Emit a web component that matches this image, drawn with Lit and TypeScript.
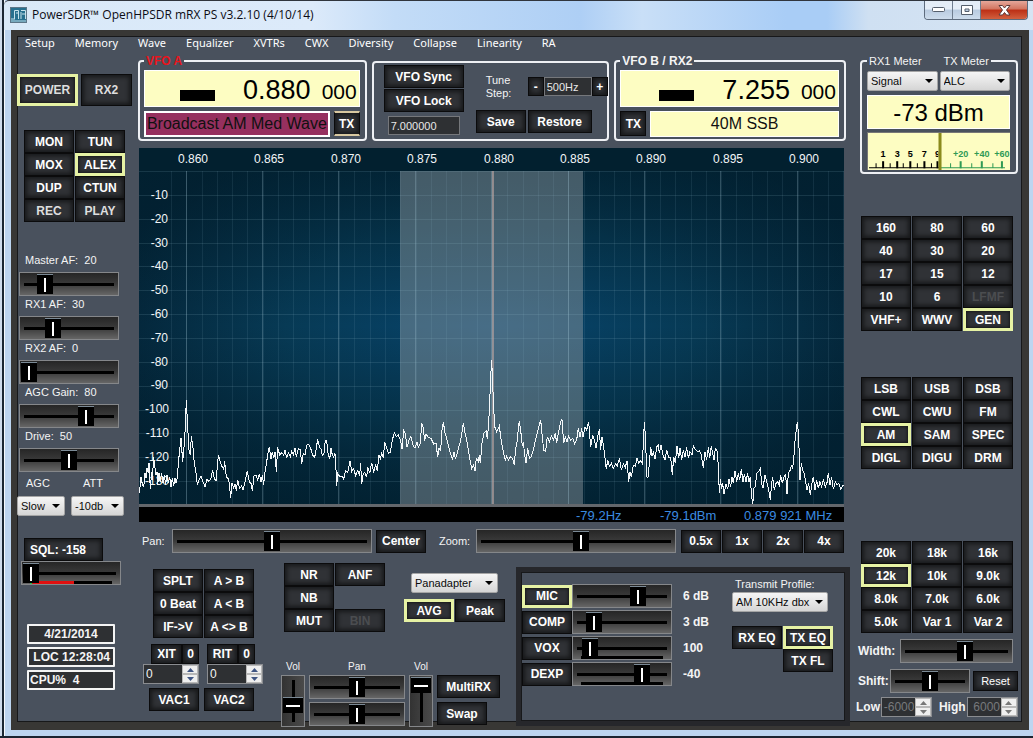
import { LitElement, html, svg, css } from "lit";
import { customElement } from "lit/decorators.js";

// Trace samples, in thirds of a pixel.
const TRACE_LOW =
  "12,460 15,440 18,412 22,432 26,442 30,400 33,415 36,385 40,400 42,368 46,448 50,395 53,420 55,350 60,385 63,405 66,395 68,435 72,400 76,425 80,400 84,430 88,405 92,435 96,405 100,430 104,410 108,442 112,415 116,438 120,415 123,430 127,412 130,370 134,330 138,295 143,365 148,310 151,260 154,180 158,260 162,330 166,345 169,287 174,325 178,370 183,400 187,435 192,420 198,408 204,425 210,440 216,418 222,424 228,415 233,390 238,415 243,424 246,390 250,345 255,362 260,378 266,388 269,364 274,412 279,415 283,430 287,475 291,430 296,445 300,432 304,452 308,420 314,445 320,438 324,450 330,425 337,393 343,425 348,430 352,452 357,408 363,405 368,420 373,402 378,425 382,405 386,435 390,395 395,365 399,340 403,320 408,358 412,335 416,355 420,335 424,395 428,322 434,345 440,338 446,345 450,330 455,355 460,338 466,350 470,333 475,345 480,325 484,350 490,325 496,330 500,372 505,340 510,345 515,315 521,312 527,325 533,345 539,352 543,330 548,298 553,320 558,328 562,345 567,340 571,300 575,302 579,340 584,358 588,325 592,345 596,352 600,340 603,390 605,438 608,400 614,410 620,408 626,417 632,392 638,398 645,362 650,395 656,385 662,408 668,392 674,405 677,370 680,432 685,400 690,398 695,412 698,380 704,400 710,368 716,395 722,375 727,392 732,345 736,355 740,340 745,355 749,305 754,320 760,340 766,338 772,300 778,278 784,290 790,285 797,302 801,328 806,272 811,280 816,322 822,300 828,290 834,315 840,325 846,305 850,322 856,310 860,248 865,265 869,302 873,283 880,292 888,295 896,312 903,310 908,350 912,325 917,330 921,270 925,245 930,280 935,295 942,325 948,345 953,358 957,335 961,355 965,345 970,325 976,305 982,270 985,248 990,280 995,300 1000,330 1005,360 1010,385 1015,375 1020,392 1024,355 1030,365 1033,345 1036,370 1041,310 1047,280 1054,272 1057,298 1061,250 1064,190 1067,110 1070,60";
const TRACE_HIGH =
  "5,60 8,130 11,200 14,260 20,275 28,258 32,290 37,320 42,345 46,360 50,348 55,360 62,350 68,355 73,375 77,325 82,300 85,265 88,242 93,280 97,318 100,305 104,345 108,370 113,325 118,355 124,350 130,330 136,300 142,280 148,255 152,240 157,290 161,330 167,335 172,290 178,305 184,288 190,300 196,280 200,310 206,275 212,245 216,238 221,310 226,290 231,305 236,288 242,300 248,295 254,312 260,300 265,265 270,290 275,265 279,290 285,262 290,270 296,245 302,320 308,285 313,300 318,325 324,285 328,268 332,330 336,290 342,330 349,388 353,360 358,380 364,370 370,385 376,372 382,378 388,355 394,390 400,372 406,382 411,362 416,425 420,395 424,410 430,375 436,378 441,355 446,368 452,362 457,372 460,310 463,245 467,300 470,410 474,412 478,370 482,320 486,348 490,338 495,358 500,320 505,315 508,340 513,315 519,345 525,360 530,330 536,352 542,352 547,405 551,350 556,370 561,318 566,355 570,325 575,360 580,330 585,350 590,322 595,355 600,335 606,345 610,318 616,328 622,335 628,332 634,345 640,385 645,335 650,360 655,322 659,355 664,318 668,340 672,360 676,325 682,335 685,380 688,460 691,418 695,448 698,430 702,462 708,432 713,448 717,418 722,440 726,412 730,428 735,392 740,425 745,400 749,420 754,388 759,425 763,402 768,425 773,400 777,425 781,412 784,460 788,495 792,445 796,440 800,400 806,395 811,385 815,430 819,445 825,405 830,425 834,440 838,460 841,480 845,430 848,412 853,450 858,430 863,425 868,435 872,405 877,430 882,410 887,405 891,462 895,400 900,392 904,378 908,385 912,345 916,290 922,245 926,290 930,420 934,370 938,390 943,402 947,425 951,450 956,430 961,465 965,435 970,410 975,450 980,420 985,445 990,425 995,440 1000,420 1006,440 1012,425 1015,398 1020,435 1025,412 1030,448 1036,425 1041,435 1046,430 1052,448 1060,435";

interface BtnOpts {
  on?: boolean;
  off?: boolean;
  cls?: string;
}

const btn = (label: string, o: BtnOpts = {}) => html`<button
  type="button"
  class=${["btn", o.cls ?? "", o.on ? "on" : ""].join(" ")}
  aria-pressed=${o.on ? "true" : "false"}
  ?disabled=${!!o.off}
>${label}</button>`;

const keypad = (labels: string[], active = "", disabled = "") => html`
  ${labels.map((l) => (l ? btn(l, { on: l === active, off: l === disabled }) : html`<span></span>`))}
`;

const slider = (name: string, value: number, cls = "") =>
  html`<input type="range" class=${`slider ${cls}`} aria-label=${name} min="0" max="100" .value=${String(value)} />`;

const select = (name: string, value: string, id = "") => html`<span class="select"
  ><select id=${id || name.replace(/\s/g, "-").toLowerCase()} aria-label=${name}><option>${value}</option></select></span>`;

const spinner = (name: string, value: string, disabled = false) => html`<span class=${disabled ? "spinner dim" : "spinner"}>
  <input type="text" inputmode="numeric" aria-label=${name} .value=${value} ?disabled=${disabled} />
  <span class="arrows">
    <button type="button" aria-label=${`${name} up`} ?disabled=${disabled}>
      <svg width="7" height="4" viewBox="0 0 7 4"><path d="M0 4L3.5 0L7 4Z" /></svg>
    </button>
    <button type="button" aria-label=${`${name} down`} ?disabled=${disabled}>
      <svg width="7" height="4" viewBox="0 0 7 4"><path d="M0 0L3.5 4L7 0Z" /></svg>
    </button>
  </span>
</span>`;

@customElement("app-root")
export class AppRoot extends LitElement {
  static styles = css`
    :host {
      display: flex;
      flex-direction: column;
      min-height: 100vh;
      box-sizing: border-box;
      border-bottom: 2px solid #1b2430;
      background: linear-gradient(90deg, #cfdcec 2px, #1b2733 2px 4px, #f6fafd 4px 5px, #bdd5f0 5px);
      font: 11px/12px "Liberation Sans", Arial, sans-serif;
      color: #f4f4f4;
    }
    * { box-sizing: border-box; }
    button, input, select { font: inherit; color: inherit; margin: 0; }

    .titlebar {
      display: flex;
      height: 30px;
      margin-left: 4px;
      padding-left: 6px;
      border-top: 1px solid #30353d;
      border-top-left-radius: 5px;
      background: linear-gradient(90deg, #d9e9f8 0, #dceafa 30%, #c3dcf7 38%, #aecff5 56%, #c9dff7 62%, #a9cdf6 76%, #a9cdf6 80%, #cfe0f2 84%, #d6e4f3 100%);
      color: #0c0c14;
    }
    .titlebar .logo { margin: 5px 4px 0 0; }
    .titlebar h1 { flex: 1; margin: 0; padding-top: 5px; font: 12px/18px "Open Sans", "Noto Sans", sans-serif; }
    .caption { display: flex; height: 19px; margin-right: 5px; border: 1px solid #5d6b7d; border-top: 0; border-radius: 0 0 4px 4px; overflow: hidden; }
    .caption button { display: grid; place-items: center; width: 28px; padding: 0; border: 0; border-right: 1px solid #6f7d8f; background: linear-gradient(#e4edf7 0 45%, #b9cbe0 50%, #cddcec); }
    .caption .close { width: 46px; border: 0; background: linear-gradient(#e5a79a 0, #d2745f 45%, #bc2f15 50%, #d2603f); }

    .frame {
      display: flex;
      flex-direction: column;
      flex: 1;
      margin: 0 4px 6px 11px;
      border: solid #383735;
      border-width: 6px 7px 8px 6px;
      background: #49515d;
      box-shadow: inset 0 0 0 1px #17181a;
    }
    nav { display: flex; gap: 20px; padding-left: 8px; height: 14px; }
    nav a { color: #fff; text-decoration: none; font: 11px/13px "Noto Sans", "Open Sans", sans-serif; }
    main { display: grid; grid-template-columns: 121px 1fr 172px; flex: 1; }

    .btn {
      height: 23px;
      width: 50px;
      padding: 0;
      border: 1px solid #0b0b0c;
      background: #303236;
      box-shadow: inset 0 0 4px 2px #17181a;
      color: #fff;
      font-weight: bold;
      font-size: 12px;
      line-height: 14px;
      white-space: nowrap;
      overflow: hidden;
    }
    .btn.on { border: 3px solid #e6f2a4; box-shadow: inset 0 0 3px 1px #17181a; }
    .btn:disabled { color: #4b4d50; }
    .btn.soft { color: #dedede; }
    .pad2 { display: grid; grid-template-columns: repeat(2, 50px); column-gap: 1px; }
    .pad3 { display: grid; grid-template-columns: repeat(3, 50px); column-gap: 1px; margin-left: 3px; }

    .slider {
      -webkit-appearance: none;
      appearance: none;
      display: block;
      width: 100px;
      height: 24px;
      padding: 0 1px;
      border: 1px solid #85878a;
      background:
        linear-gradient(#000, #000) center / calc(100% - 8px) 3px no-repeat,
        linear-gradient(#262626, #3a3a3a 50%, #666);
    }
    .slider::-webkit-slider-thumb {
      -webkit-appearance: none;
      width: 16px;
      height: 20px;
      border-top: 1px solid #7b8a96;
      border-radius: 0;
      background: linear-gradient(#fff, #fff) center / 2px 14px no-repeat, #000;
    }
    .slider.grow { flex: 1; width: auto; min-width: 60px; }
    .slider.floor {
      background:
        linear-gradient(#000, #000) center / calc(100% - 8px) 3px no-repeat,
        linear-gradient(#000, #000) 50% 100% / calc(100% - 16px) 3px no-repeat,
        linear-gradient(#262626, #3a3a3a 50%, #666);
    }
    .slider.squelch {
      background:
        linear-gradient(#000, #000) center / calc(100% - 8px) 3px no-repeat,
        linear-gradient(90deg, #2c4 2px, #e01010 2px 44px, #000 44px) 50% 100% / calc(100% - 16px) 3px no-repeat,
        linear-gradient(#262626, #3a3a3a 50%, #666);
    }
    .slider.vert {
      writing-mode: vertical-lr;
      direction: rtl;
      width: 24px;
      height: 52px;
      padding: 1px 0;
      background:
        linear-gradient(#000, #000) center / 3px calc(100% - 8px) no-repeat,
        linear-gradient(90deg, #333, #4a4a4a);
    }
    .slider.vert::-webkit-slider-thumb {
      width: 20px;
      height: 16px;
      background: linear-gradient(#fff, #fff) center / 14px 2px no-repeat, #000;
    }

    .select { position: relative; display: block; height: 20px; }
    .select select {
      -webkit-appearance: none;
      appearance: none;
      display: block;
      width: 100%;
      height: 100%;
      padding: 0 0 0 3px;
      border: 1px solid #a5a5a5;
      border-radius: 2px;
      background: linear-gradient(#f5f5f5, #e6e6e6 50%, #d5d5d5);
      color: #0a0a0a;
    }
    .select::after {
      content: "";
      position: absolute;
      right: 5px;
      top: 8px;
      border: 4px solid transparent;
      border-top-color: #000;
      border-bottom: 0;
      pointer-events: none;
    }

    .spinner { display: flex; width: 56px; height: 20px; border: 1px solid #8a8c90; background: #2e3033; }
    .spinner input { flex: 1; min-width: 0; padding: 0 2px; border: 0; background: none; font-size: 12px; color: #f4f4f4; }
    .arrows { display: flex; flex-direction: column; width: 16px; }
    .arrows button { display: grid; place-items: center; flex: 1; min-height: 0; padding: 0; border: 1px solid #b8b8b8; background: #efefef; }
    .arrows path { fill: #3f5583; }
    .spinner.dim { width: 51px; font-weight: normal; }
    .spinner.dim input { padding: 0 1px; text-align: right; color: #77797c; }
    .dim path { fill: #777; }

    fieldset, .box { margin: 0; min-width: 0; border: 2px solid #eef0f4; border-radius: 4px; }
    legend { padding: 0 2px; font-weight: bold; font-size: 12px; line-height: 12px; white-space: nowrap; }

    /* Left column */
    .left { padding-top: 24px; }
    .power { display: flex; gap: 3px; }
    .power .btn { height: 32px; width: 51px; }
    .power .btn.on { width: 61px; }
    .left .pad2 { margin: 24px 0 0 7px; }
    .levels { margin: 30px 0 0 2px; }
    .levels label { display: block; height: 20px; padding: 2px 0 0 6px; white-space: pre; }
    .agc { display: grid; grid-template-columns: 48px 53px; column-gap: 6px; }
    .agc .cap { padding: 5px 0 7px 9px; }
    .sql { margin: 22px 0 0 4px; }
    .sql .btn { display: block; width: 79px; margin-left: 3px; padding-left: 5px; text-align: left; }
    .status { display: grid; gap: 3px; width: 88px; margin: 39px 0 0 10px; }
    .status output { height: 20px; border: 2px solid #f4f4f4; border-radius: 1px; background: #2e3033; font: bold 12px/16px "Liberation Sans", Arial, sans-serif; text-align: center; white-space: pre; }
    .status .start { padding-left: 1px; text-align: left; }

    /* Centre column */
    .center { padding-top: 5px; min-width: 0; }
    .vfos { display: grid; grid-template-columns: 229fr 238fr 232fr; gap: 5px; padding-right: 4px; }
    .vfos fieldset { padding: 3px 5px 2px 4px; }
    .vfos .red { color: #e8141c; }
    .freq { display: flex; align-items: baseline; justify-content: flex-end; gap: 11px; height: 37px; padding-right: 2px; border: 1px solid #fff; background: #fdfdc2; color: #000; font-size: 27px; line-height: 38px; }
    .freq small { font-size: 21px; }
    .freq i { width: 35px; height: 11px; margin: 0 17px 5px 0; background: #000; align-self: flex-end; }
    .band { display: flex; gap: 4px; height: 26px; margin-top: 4px; }
    .band input { flex: 1; min-width: 0; padding: 0 2px; border: 1px solid #fff; background: #fdfdc2; color: #111; font-size: 16px; text-align: center; }
    .band input.wine { padding: 0; border-width: 2px; background: #96305f; }
    .band .btn { width: 26px; height: 25px; }
    .band .btn.armed { border-block: 2px solid #d8c8a0; }
    .box { margin-top: 6px; padding: 2px 10px; display: grid; grid-template-columns: 80px 1fr; column-gap: 12px; }
    .lock { display: grid; align-content: start; row-gap: 1px; }
    .lock .btn { width: 80px; }
    .field { border: 1px solid #75777b; background: #2e3033; padding: 0 2px; height: 19px; min-width: 0; color: #e8e8e8; }
    .lock .field { width: 72px; margin: 3px 0 0 4px; }
    .tune { display: flex; align-items: center; height: 33px; margin-top: 5px; padding-left: 10px; }
    .tune label { width: 42px; line-height: 13px; }
    .tune .btn { width: 16px; height: 19px; flex: none; }
    .tune .field { width: 48px; }
    .store { display: flex; gap: 2px; margin-top: 7px; }
    .store .btn + .btn { width: 64px; }

    .scope { margin: 7px 6px 0 1px; }
    .scope svg { display: block; width: 100%; }
    .scope text { font-size: 12px; fill: #f2f5f7; }
    .readout { display: flex; justify-content: flex-end; height: 18px; padding-right: 16px; border-top: 3px solid #63676c; background: #000; color: #3b8be0; font-size: 13px; line-height: 17px; white-space: nowrap; }
    .readout span { width: 84px; flex: none; }
    .zoom { display: flex; align-items: center; margin: 7px 6px 0 4px; }
    .zoom label { width: 30px; flex: none; }
    .zoom .wide { width: 50px; margin: 0 13px 0 4px; flex: none; }
    .zoom .wide + label { width: 37px; }
    .steps { display: flex; gap: 1px; margin-left: 5px; }
    .steps .btn { width: 40px; }

    .lower { display: flex; height: 159px; margin-top: 10px; }
    .split { flex: none; width: 143px; padding: 6px 0 0 5px; }
    .split .pad2 { margin-left: 10px; }
    .offsets { display: grid; grid-template-columns: 56px 56px; column-gap: 8px; margin-top: 6px; }
    .pair { display: flex; }
    .pair:first-child { justify-content: flex-end; }
    .pair .btn { width: 31px; height: 20px; }
    .pair .btn + .btn { width: 17px; }
    .vac { display: flex; gap: 5px; margin: 4px 0 0 6px; }
    .mid { flex: 1; display: flex; flex-direction: column; min-width: 234px; }
    .dsp { display: flex; gap: 19px; padding-left: 3px; height: 98px; flex: none; }
    .display { padding-top: 10px; }
    .display .select { width: 87px; margin: 0 auto 6px; }
    .mixer { display: grid; grid-template-columns: 24px 96px 24px 63px; column-gap: 4px; }
    .mixer .cap { font-size: 10px; height: 14px; text-align: center; }
    .mixer .stack { display: grid; row-gap: 3px; height: 51px; }
    .mixer .stack .slider { width: 96px; }
    .mixer .stack .btn:first-child { width: 63px; }

    .tx { flex: none; width: 334px; height: 159px; margin-top: 4px; display: flex; border: 5px solid #26272b; padding: 12px 12px 0 1px; box-shadow: inset 0 0 0 1px #17181a; }
    .voice { display: grid; grid-template-columns: 50px 100px 38px; row-gap: 2px; align-content: start; align-items: center; }
    .voice output { padding-left: 11px; font-weight: bold; font-size: 12px; white-space: nowrap; }
    .profile { margin-left: 22px; }
    .profile label { display: block; padding: 0 0 2px 3px; margin-top: -6px; }
    .profile .select { width: 96px; margin-bottom: 14px; }

    /* Right column */
    .right { padding: 5px 4px 0 8px; display: flex; flex-direction: column; }
    .meter { height: 119px; margin-left: 2px; padding: 4px 6px 0 5px; }
    .meter legend { display: flex; gap: 22px; font-weight: normal; font-size: 11px; }
    .choices { display: grid; grid-template-columns: 1fr 1fr; gap: 2px; }
    .level { display: block; height: 34px; margin: 4px 0 3px; border: 1px solid #fff; background: #fdfdc2; color: #000; font-size: 24px; line-height: 33px; text-align: center; }
    .meter svg { display: block; width: 100%; background: #fdfdc2; }
    .meter text { font-size: 9px; font-weight: bold; text-anchor: middle; }
    .bands { margin-top: 42px; }
    .modes { margin-top: 46px; }
    .filters { margin-top: 72px; }
    .line { display: flex; align-items: center; font-weight: bold; font-size: 12px; }
    .line .reset { width: 45px; height: 20px; margin-left: 2px; font-weight: normal; font-size: 11px; }
    .line .high { margin-left: 5px; }
    .width { margin-top: 6px; padding-right: 5px; gap: 5px; }
    .shift { margin-top: 6px; gap: 1px; }
    .edges { margin-top: 4px; justify-content: space-between; margin-left: -2px; }
  `;

  private scope() {
    const x0 = 47.5;
    const step = 76.4;
    const freqs = ["0.860", "0.865", "0.870", "0.875", "0.880", "0.885", "0.890", "0.895", "0.900"];
    const minor = Array.from({ length: 46 }, (_, i) => Math.round(x0 - step + 61 + i * 15.28) + 0.5);
    return html`<svg viewBox="0 0 705 356" role="img" aria-label="Panadapter">
      <defs>
        <radialGradient id="glow" cx="50%" cy="50%" r="58%">
          <stop offset="0" stop-color="#07446c" />
          <stop offset=".5" stop-color="#073a55" />
          <stop offset="1" stop-color="#032133" />
        </radialGradient>
        <linearGradient id="shade" x2="0" y2="1">
          <stop offset="0" stop-color="#01202f" stop-opacity=".7" />
          <stop offset=".5" stop-color="#01202f" stop-opacity="0" />
          <stop offset="1" stop-color="#01202f" stop-opacity=".7" />
        </linearGradient>
      </defs>
      <rect width="705" height="356" fill="url(#glow)" />
      <rect width="705" height="356" fill="url(#shade)" />
      <rect width="705" height="23" fill="#02202f" />
      <rect x="261" y="23" width="183" height="333" fill="#a0a8ac" fill-opacity=".42" />
      ${minor.map((x) => svg`<path d=${`M${x} 23V356`} stroke="#9fc4d4" stroke-opacity=".1" />`)}
      ${freqs.map((_, i) => svg`<path d=${`M${Math.round(x0 + i * step) - 0.5} 23V356`} stroke="#a9c9d6" stroke-opacity=".28" />`)}
      ${Array.from({ length: 14 }, (_, i) => svg`<path d=${`M0 ${Math.round(23 + i * 23.85) + 0.5}H705`} stroke="#9fc4d4" stroke-opacity=".14" />`)}
      <rect x="353" y="23" width="2" height="333" fill="#b9a3a0" fill-opacity=".65" />
      ${freqs.map((f, i) => svg`<text x=${Math.round(54 + i * step)} y="15" text-anchor="middle">${f}</text>`)}
      ${Array.from({ length: 13 }, (_, i) => svg`<text x=${i > 8 ? 30 : 29} y=${Math.round(51 + i * 23.8)} text-anchor="end">${-10 * (i + 1)}</text>`)}
      <g transform="translate(-4 192) scale(.33333)" fill="none" stroke="#f4f8fa" shape-rendering="crispEdges">
        <polyline points=${TRACE_LOW} vector-effect="non-scaling-stroke" />
        <polyline points=${TRACE_HIGH} transform="translate(1065)" vector-effect="non-scaling-stroke" />
      </g>
    </svg>`;
  }

  private meterScale() {
    const low: [number, string][] = [[16, "1"], [30, "3"], [43, "5"], [57, "7"], [70, "9"]];
    const high: [number, string][] = [[93, "+20"], [114, "+40"], [134, "+60"]];
    return html`<svg viewBox="0 0 142 38" role="img" aria-label="Signal meter">
      <path d="M2 35.5H72M9 35v-4M23 35v-4M36 35v-4M50 35v-4M64 35v-4" stroke="#000" fill="none" />
      <path d="M72 35.5H137M83 35v-4M104 35v-4M125 35v-4" stroke="#2f9a55" fill="none" />
      ${low.map(([x, t]) => svg`<path d=${`M${x} 36v-7`} stroke="#000" stroke-width="2" /><text x=${x} y="25" fill="#000">${t}</text>`)}
      <rect x="71" y="1" width="5" height="28" fill="#fdfdc2" />
      ${high.map(([x, t]) => svg`<path d=${`M${x} 36v-7`} stroke="#2f9a55" stroke-width="2" /><text x=${x} y="25" fill="#2f9a55">${t}</text>`)}
      <path d="M72.5 0V38" stroke="#8a8a1c" stroke-width="3" />
      <path d="M.5 38V.5H142" stroke="#777" fill="none" />
    </svg>`;
  }

  render() {
    const menu = ["Setup", "Memory", "Wave", "Equalizer", "XVTRs", "CWX", "Diversity", "Collapse", "Linearity", "RA"];
    const levels: [string, string, number][] = [
      ["Master AF:", "20", 20], ["RX1 AF:", "30", 30], ["RX2 AF:", "0", 0], ["AGC Gain:", "80", 71], ["Drive:", "50", 50],
    ];
    const voice: [string, number, string][] = [["MIC", 70, "6 dB"], ["COMP", 15, "3 dB"], ["VOX", 10, "100"], ["DEXP", 75, "-40"]];
    return html`
      <header class="titlebar">
        <svg class="logo" width="18" height="18" viewBox="0 0 18 18">
          <rect x=".5" y="1.5" width="16" height="15" fill="#27708f" stroke="#5c7688" />
          <path d="M1 13h4M4.5 13V4.5h4V13M11 13V6M11 4.5h4.5V13M1 15h15M6 7h2M12 8h3" fill="none" stroke="#c6e2ec" />
        </svg>
        <h1>PowerSDR™ OpenHPSDR mRX PS v3.2.10 (4/10/14)</h1>
        <div class="caption">
          <button type="button" aria-label="Minimize"><svg width="13" height="6"><rect x=".5" y=".5" width="12" height="4" rx="1" fill="#fff" stroke="#555f6c" /></svg></button>
          <button type="button" aria-label="Maximize"><svg width="12" height="11"><path d="M.5.5h11v9H.5zM4 4v2.500h4V4z" fill="#fff" fill-rule="evenodd" stroke="#555f6c" /></svg></button>
          <button type="button" class="close" aria-label="Close"><svg width="13" height="11"><path d="M1 .5h3.500l2 2.500 2-2.500H12L8.500 5l3.500 5H8.500l-2-2.500-2 2.500H1l3.500-5z" fill="#fff" stroke="#5b3a3a" /></svg></button>
        </div>
      </header>
      <div class="frame">
        <nav>${menu.map((m) => html`<a href="#">${m}</a>`)}</nav>
        <main>
          <section class="left">
            <div class="power">${btn("POWER", { on: true, cls: "soft" })}${btn("RX2", { cls: "soft" })}</div>
            <div class="pad2">
              ${keypad(["MON", "TUN", "MOX", "ALEX", "DUP", "CTUN"], "ALEX")}
              ${btn("REC", { cls: "soft" })}${btn("PLAY", { cls: "soft" })}
            </div>
            <div class="levels">
              ${levels.map(([n, v, p], i) => html`<label for=${`lv${i}`}>${n}  ${v}</label><input id=${`lv${i}`} type="range" class="slider" .value=${String(p)} />`)}
            </div>
            <div class="agc">
              <label class="cap" for="agc">AGC</label><label class="cap" for="att">&nbsp;ATT</label>
              ${select("AGC", "Slow")}${select("ATT", "-10db")}
            </div>
            <div class="sql">${btn("SQL: -158")}${slider("Squelch", 0, "squelch")}</div>
            <div class="status">
              <output>4/21/2014</output><output class="start"> LOC 12:28:04</output><output class="start">CPU%  4</output>
            </div>
          </section>

          <section class="center">
            <div class="vfos">
              <fieldset>
                <legend class="red">VFO A</legend>
                <div class="freq"><i></i><span>0.880</span><small>000</small></div>
                <div class="band"><input class="wine" aria-label="VFO A band" readonly .value=${"Broadcast AM Med Wave"} />${btn("TX", { cls: "armed" })}</div>
              </fieldset>
              <div class="box">
                <div class="lock">${btn("VFO Sync")}${btn("VFO Lock")}<input class="field" aria-label="Saved frequency" .value=${"7.000000"} /></div>
                <div>
                  <div class="tune"><label for="step">Tune<br />Step:</label>${btn("-")}<input id="step" class="field" .value=${"500Hz"} />${btn("+")}</div>
                  <div class="store">${btn("Save")}${btn("Restore")}</div>
                </div>
              </div>
              <fieldset>
                <legend>VFO B / RX2</legend>
                <div class="freq"><i></i><span>7.255</span><small>000</small></div>
                <div class="band">${btn("TX")}<input aria-label="VFO B band" readonly .value=${"40M SSB"} /></div>
              </fieldset>
            </div>
            <div class="scope">
              ${this.scope()}
              <div class="readout"><span>-79.2Hz</span><span>-79.1dBm</span><span>0.879 921 MHz</span></div>
            </div>
            <div class="zoom">
              <label for="pan">Pan:</label><input id="pan" type="range" class="slider grow" .value=${"50"} />
              ${btn("Center", { cls: "wide" })}
              <label for="zoom">Zoom:</label><input id="zoom" type="range" class="slider grow" .value=${"53"} />
              <div class="steps">${keypad(["0.5x", "1x", "2x", "4x"])}</div>
            </div>
            <div class="lower">
              <div class="split">
                <div class="pad2">${keypad(["SPLT", "A > B", "0 Beat", "A < B", "IF->V", "A <> B"])}</div>
                <div class="offsets">
                  <div class="pair">${btn("XIT")}${btn("0")}</div>
                  <div class="pair">${btn("RIT")}${btn("0")}</div>
                  ${spinner("XIT offset", "0")}${spinner("RIT offset", "0")}
                </div>
                <div class="vac">${btn("VAC1")}${btn("VAC2")}</div>
              </div>
              <div class="mid">
                <div class="dsp">
                  <div><div class="pad2">${keypad(["NR", "ANF", "NB", "", "MUT", "BIN"], "", "BIN")}</div></div>
                  <div class="display">${select("Display mode", "Panadapter")}<div class="pad2">${keypad(["AVG", "Peak"], "AVG")}</div></div>
                </div>
                <div class="mixer">
                  <span class="cap">Vol</span><span class="cap">Pan</span><span class="cap">Vol</span><span></span>
                  ${slider("RX1 volume", 36, "vert")}
                  <div class="stack">${slider("RX1 pan", 50)}${slider("Sub pan", 50)}</div>
                  ${slider("Sub volume", 100, "vert")}
                  <div class="stack">${btn("MultiRX")}${btn("Swap")}</div>
                </div>
              </div>
              <div class="tx">
                <div class="voice">
                  ${voice.map(([n, p, v], i) => html`${btn(n, { on: i === 0 })}${slider(n, p, i > 1 ? "floor" : "")}<output>${v}</output>`)}
                </div>
                <div class="profile">
                  <label for="profile">Transmit Profile:</label>${select("Transmit Profile", "AM 10KHz dbx", "profile")}
                  <div class="pad2">${keypad(["RX EQ", "TX EQ", "", "TX FL"], "TX EQ")}</div>
                </div>
              </div>
            </div>
          </section>

          <section class="right">
            <fieldset class="meter">
              <legend><span>RX1 Meter</span><span>TX Meter</span></legend>
              <div class="choices">${select("RX1 Meter", "Signal")}${select("TX Meter", "ALC")}</div>
              <output class="level">-73 dBm</output>
              ${this.meterScale()}
            </fieldset>
            <div class="pad3 bands">${keypad(["160", "80", "60", "40", "30", "20", "17", "15", "12", "10", "6", "LFMF", "VHF+", "WWV", "GEN"], "GEN", "LFMF")}</div>
            <div class="pad3 modes">${keypad(["LSB", "USB", "DSB", "CWL", "CWU", "FM", "AM", "SAM", "SPEC", "DIGL", "DIGU", "DRM"], "AM")}</div>
            <div class="pad3 filters">${keypad(["20k", "18k", "16k", "12k", "10k", "9.0k", "8.0k", "7.0k", "6.0k", "5.0k", "Var 1", "Var 2"], "12k")}</div>
            <div class="line width"><label for="width">Width:</label><input id="width" type="range" class="slider grow" .value=${"59"} /></div>
            <div class="line shift"><label for="shift">Shift:</label><input id="shift" type="range" class="slider grow" .value=${"50"} />${btn("Reset", { cls: "reset" })}</div>
            <div class="line edges"><span>Low</span>${spinner("Low", "-6000", true)}<span class="high">High</span>${spinner("High", "6000", true)}</div>
          </section>
        </main>
      </div>
    `;
  }
}
